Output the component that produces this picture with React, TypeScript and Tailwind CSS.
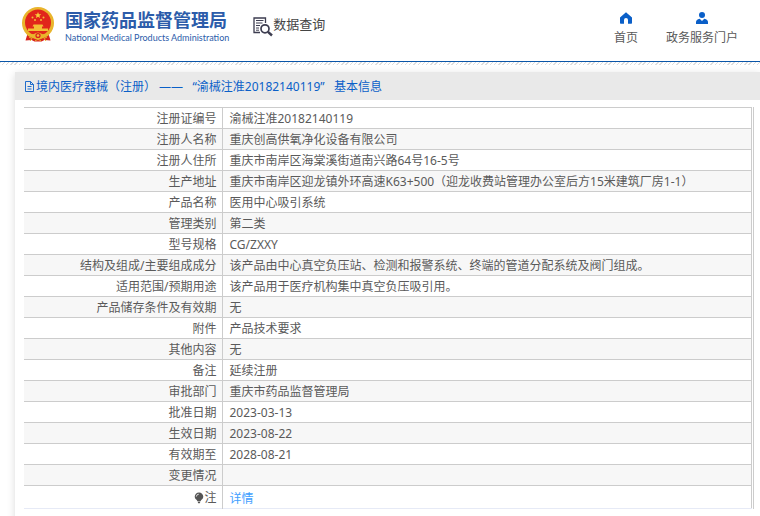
import React from 'react';

const rows: [string, string][] = [
  ['注册证编号', '渝械注准20182140119'],
  ['注册人名称', '重庆创高供氧净化设备有限公司'],
  ['注册人住所', '重庆市南岸区海棠溪街道南兴路64号16-5号'],
  ['生产地址', '重庆市南岸区迎龙镇外环高速K63+500（迎龙收费站管理办公室后方15米建筑厂房1-1）'],
  ['产品名称', '医用中心吸引系统'],
  ['管理类别', '第二类'],
  ['型号规格', 'CG/ZXXY'],
  ['结构及组成/主要组成成分', '该产品由中心真空负压站、检测和报警系统、终端的管道分配系统及阀门组成。'],
  ['适用范围/预期用途', '该产品用于医疗机构集中真空负压吸引用。'],
  ['产品储存条件及有效期', '无'],
  ['附件', '产品技术要求'],
  ['其他内容', '无'],
  ['备注', '延续注册'],
  ['审批部门', '重庆市药品监督管理局'],
  ['批准日期', '2023-03-13'],
  ['生效日期', '2023-08-22'],
  ['有效期至', '2028-08-21'],
  ['变更情况', ''],
];

function Emblem() {
  return (
    <svg width="34" height="36" viewBox="0 0 34 36" aria-hidden="true">
      <path d="M7 25 4.500 33.500l6-.5 3 1.500h7l3-1.500 6 .5L27 25z" fill="#d9231c" />
      <circle cx="17" cy="16" r="16" fill="#e9b52c" />
      <circle cx="17" cy="15.500" r="13" fill="#e1251b" />
      <path d="m17 5 .9 2.200 2.400.1-1.900 1.500.7 2.300-2.100-1.300-2.100 1.300.7-2.300-1.900-1.500 2.400-.1z" fill="#f8cf3b" />
      <g fill="#f3bd35">
        <circle cx="11.500" cy="10.500" r="1" />
        <circle cx="22.500" cy="10.500" r="1" />
        <circle cx="14" cy="13" r="1" />
        <circle cx="20" cy="13" r="1" />
        <path d="M12.500 17.500h9l1 2h-1.500v2h6v2.500H7v-2.500h6v-2h-1.500z" />
      </g>
      <path d="M5 26q6 2 8 1 4-3 8 0 2 1 8-1l-2 3-5 1.500q-5 3-10 0L7 29z" fill="#e9b52c" />
      <circle cx="17" cy="28.500" r="2.600" fill="#d9231c" />
      <circle cx="17" cy="28.500" r="1.300" fill="#f3bd35" />
      <path d="m8 30 3 1.500-2 2.500M26 30l-3 1.500 2 2.500M14 33.500q3-2 6 0" stroke="#e9b52c" fill="none" />
    </svg>
  );
}

function SearchDocIcon() {
  return (
    <svg width="20" height="20" viewBox="0 0 20 20" fill="none" stroke="#3d3d50" aria-hidden="true">
      <path d="M7 15.500H1V1h11.500v5" strokeWidth="1.300" />
      <path d="M3 3.500h7.500M3 6h6.500M3 8.500h4M3 11h3M3 13.200h3" strokeWidth="1" />
      <circle cx="12" cy="11.800" r="4" strokeWidth="1.700" />
      <path d="m15 14.800 4 3.700" strokeWidth="2.400" />
    </svg>
  );
}

function HomeIcon() {
  return (
    <svg width="12" height="12" viewBox="0 0 12 12" fill="#0a5fc8" aria-hidden="true">
      <path d="M6 .3 0 5.500V11a.7.700 0 0 0 .7.700H4V8a2 2 0 0 1 4 0v3.700h3.300A.7.700 0 0 0 12 11V5.500z" />
    </svg>
  );
}

function PersonIcon() {
  return (
    <svg width="12" height="12" viewBox="0 0 12 12" fill="#0a5fc8" aria-hidden="true">
      <circle cx="6" cy="3" r="3" />
      <path d="M0 12V10q0-2.500 3.700-3.300L6 9l2.300-2.300Q12 7.500 12 10v2z" />
    </svg>
  );
}

function FileIcon() {
  return (
    <svg width="11" height="12" viewBox="0 0 11 12" fill="none" stroke="#0a5fc8" aria-hidden="true">
      <path d="M1.500.500h5l3 3v7h-8zM6.500.500v3h3M3.500 5.500h4M3.500 8h4" strokeWidth=".9" />
    </svg>
  );
}

function BulbIcon() {
  return (
    <svg width="10" height="12" viewBox="0 0 10 12" className="inline-block align-[-2px]" aria-hidden="true">
      <path d="M5 .5a4.300 4.300 0 0 0-4.300 4.300C.7 7 3 7.800 3.300 9h3.400C7 7.800 9.300 7 9.300 4.800A4.300 4.300 0 0 0 5 .5zM3.500 9.600h3L5.800 11.300H4.200z" fill="#555" />
      <path d="M2.300 4.600A2.600 2.600 0 0 1 4.800 2.200" stroke="#fff" strokeWidth=".8" fill="none" />
    </svg>
  );
}

export default function App() {
  return (
    <div className="min-h-screen overflow-hidden bg-white font-['Noto_Sans','Noto_Sans_CJK_SC',sans-serif] text-xs text-[#5a5a5a]">
      <header className="flex h-[62px] items-start justify-between border-b border-[#0a55a8] pr-[22px] pl-[21px]">
        <div className="flex">
          <div className="pt-[7px]"><Emblem /></div>
          <h1 className="ml-2.5 pt-2 text-[#2c5caa]">
            <span className="block text-[18px] leading-[24px] font-bold">国家药品监督管理局</span>
            <span className="block font-['Lato',sans-serif] text-[9px] leading-[12px] font-normal">National Medical Products Administration</span>
          </h1>
          <div className="ml-6 flex items-start pt-[17px]">
            <SearchDocIcon />
            <span className="text-[13px] leading-[15px] text-[#444]">数据查询</span>
          </div>
        </div>
        <nav className="flex gap-7 pt-3">
          <a href="#home" className="flex flex-col items-center gap-[5px]">
            <HomeIcon />
            <span className="leading-[18px]">首页</span>
          </a>
          <a href="#portal" className="flex flex-col items-center gap-[5px]">
            <PersonIcon />
            <span className="leading-[18px]">政务服务门户</span>
          </a>
        </nav>
      </header>
      <div className="h-[3px] bg-[repeating-linear-gradient(135deg,#ddd_0px,#ddd_1px,#fff_1px,#fff_3px)]" />
      <main className="mt-[7px] ml-[15px] min-h-[460px] bg-white shadow-[0_2px_8px_rgba(0,0,0,0.15)]">
        <h2 className="flex h-7 items-center bg-[#e9e9e9] pt-0.5 pl-[9px] text-[#0a5fc8]">
          <FileIcon />
          <span className="ml-px whitespace-pre">境内医疗器械（注册） ——   “渝械注准20182140119”   基本信息</span>
        </h2>
        <div className="mt-[7px] mr-1.5 ml-[9px] border-r border-[#ccc] pr-px">
          <table className="w-full table-fixed border-collapse border-t border-r border-[#ccc]">
            <colgroup>
              <col className="w-[198px]" />
              <col />
            </colgroup>
            <tbody>
              {rows.map(([label, value]) => (
                <tr key={label} className="h-[21px] border-b border-[#ccc] even:bg-[#f7f7f7]">
                  <th scope="row" className="border-r border-[#ccc] p-0 pt-0.5 pr-[5px] text-right leading-[18px] font-normal">{label}</th>
                  <td className="p-0 pt-0.5 pl-[7px] leading-[18px]">{value}</td>
                </tr>
              ))}
              <tr className="h-[23px] border-b border-[#e6eaf6]">
                <th scope="row" className="border-r border-[#ccc] p-0 pt-0.5 pr-[5px] text-right leading-[18px] font-normal">
                  <BulbIcon />注
                </th>
                <td className="p-0 pt-1 pl-[7px] leading-[18px]">
                  <a href="#detail" className="text-[#409eff]">详情</a>
                </td>
              </tr>
            </tbody>
          </table>
        </div>
      </main>
    </div>
  );
}
